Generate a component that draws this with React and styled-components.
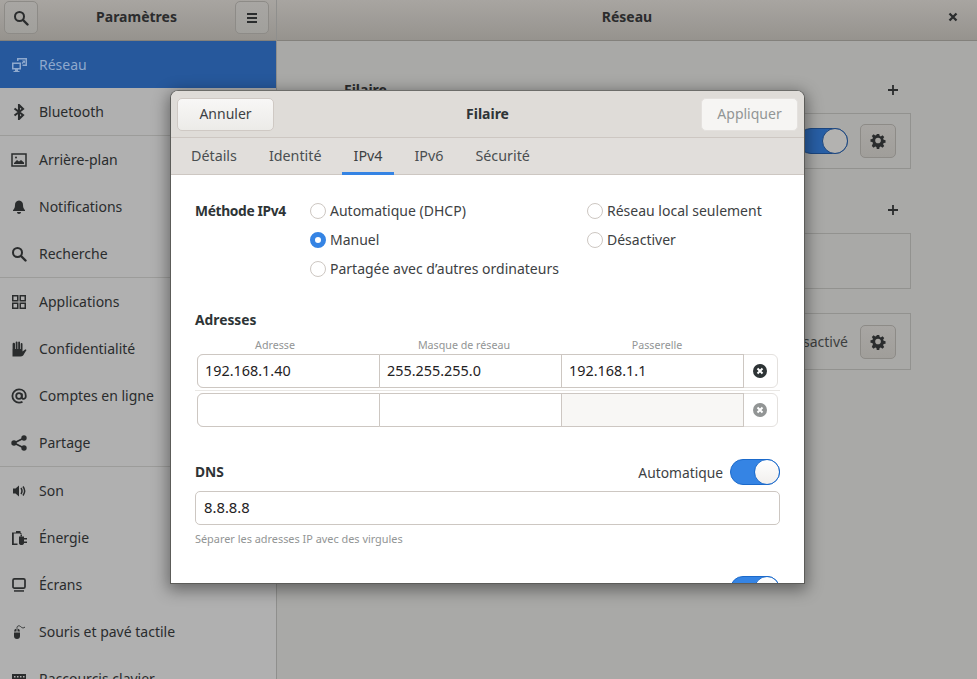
import React from "react";
import styled, { createGlobalStyle } from "styled-components";

const Global = createGlobalStyle`
  html, body { margin: 0; padding: 0; background: #a9a9a7; }
  * { box-sizing: border-box; }
`;

const Page = styled.div`
  position: relative;
  width: 977px;
  height: 679px;
  overflow: hidden;
  display: flex;
  font-family: "Noto Sans", "Open Sans", sans-serif;
  font-size: 14px;
  color: #2a2c2d;
`;

const Sidebar = styled.aside`
  width: 277px;
  flex: none;
  display: flex;
  flex-direction: column;
  background: #b0b0b0;
  border-right: 1px solid #8f8f8d;
`;

const HeaderBar = styled.header`
  height: 41px;
  flex: none;
  display: flex;
  align-items: flex-start;
  justify-content: space-between;
  padding: ${p => (p.$main ? "1px 16px 0 32px" : "1px 7px 0 4px")};
  background: linear-gradient(#a8a5a1, #96938e);
  border-bottom: 1px solid #83817c;
`;

const HeaderTitle = styled.div`
  flex: 1;
  text-align: center;
  font-weight: 700;
  font-size: 14px;
  line-height: 32px;
  color: #2b2c2d;
`;

const HeaderButton = styled.div`
  width: 34px;
  height: 33px;
  display: flex;
  align-items: center;
  justify-content: center;
  border: 1px solid #8d8b87;
  border-radius: 5px;
  background: linear-gradient(#a8a6a3, #a1a09c);
`;

const CloseSlot = styled.div`
  height: 32px;
  display: flex;
  align-items: center;
`;

const Row = styled.div`
  height: 47px;
  flex: none;
  display: flex;
  align-items: center;
  gap: 12px;
  padding-left: 11px;
  background: ${p => (p.$active ? "#26589c" : "transparent")};
  color: ${p => (p.$active ? "#8fa9cd" : "#2a2c2d")};
  white-space: nowrap;
`;

const Sep = styled.div`
  height: 1px;
  flex: none;
  background: #9c9c9a;
`;

const Main = styled.main`
  flex: 1;
  display: flex;
  flex-direction: column;
`;

const MainBody = styled.div`
  flex: 1;
  background: #a9a9a7;
  padding: 39px 66px 0 67px;
`;

const SectionHead = styled.div`
  height: 33px;
  display: flex;
  justify-content: space-between;
  padding-right: 9px;
  font-weight: 700;
  font-size: 14px;
  line-height: 20px;
  color: #2b2c2d;
`;

const PlusSlot = styled.span`
  width: 18px;
  height: 20px;
  display: flex;
  align-items: center;
  justify-content: center;
`;

const BgBox = styled.div`
  height: ${p => p.$h}px;
  margin-bottom: ${p => p.$mb}px;
  border: 1px solid #92928f;
  display: flex;
  align-items: center;
  justify-content: flex-end;
  gap: 12px;
  padding-right: 14px;
  color: #3c3e3e;
`;

const BgGear = styled.div`
  width: 36px;
  height: 34px;
  display: flex;
  align-items: center;
  justify-content: center;
  border: 1px solid #8d8b87;
  border-radius: 5px;
  background: linear-gradient(#a8a6a3, #a09e9a);
`;

const Toggle = styled.div`
  position: relative;
  width: 50px;
  height: 26px;
  flex: none;
  border-radius: 13px;
  background: ${p => (p.$dim ? "#285fa6" : "#3584e4")};
  border: 1px solid ${p => (p.$dim ? "#1b4680" : "#1b6acb")};
`;

const Knob = styled.div`
  position: absolute;
  right: -1px;
  top: -1px;
  width: 26px;
  height: 26px;
  border-radius: 50%;
  background: ${p => (p.$dim ? "#b3b2b0" : "linear-gradient(#ffffff, #f1efed)")};
  border: 1px solid ${p => (p.$dim ? "#1b4680" : "#1b6acb")};
`;

const Dialog = styled.section`
  position: absolute;
  left: 170px;
  top: 90px;
  width: 635px;
  height: 494px;
  display: flex;
  flex-direction: column;
  overflow: hidden;
  background: #fff;
  border: 1px solid #5c5c59;
  border-top-color: #6d6d6a;
  border-radius: 8px 8px 0 0;
`;

const DialogShadow = styled.div`
  position: absolute;
  left: 170px;
  top: 90px;
  width: 635px;
  height: 494px;
  border-radius: 8px 8px 0 0;
  box-shadow: 0 4px 16px 2px rgba(0, 0, 0, 0.42);
`;

const DialogBar = styled.div`
  height: 47px;
  flex: none;
  display: flex;
  align-items: center;
  justify-content: space-between;
  padding: 0 6px;
  background: #dfdcd8;
  border-bottom: 1px solid #cdc7c2;
`;

const DialogTitle = styled.div`
  flex: 1;
  text-align: center;
  font-weight: 700;
  font-size: 14px;
  padding-bottom: 1px;
  color: #2e3436;
`;

const Button = styled.div`
  width: 97px;
  height: 33px;
  display: flex;
  align-items: center;
  justify-content: center;
  padding-bottom: 1px;
  border-radius: 5px;
  border: 1px solid ${p => (p.$disabled ? "#e4e1de" : "#cfc9c4")};
  background: ${p => (p.$disabled ? "#f6f5f3" : "linear-gradient(#f8f7f6, #ecebe8)")};
  color: ${p => (p.$disabled ? "#929595" : "#3d4143")};
`;

const Tabs = styled.nav`
  height: 37px;
  flex: none;
  display: flex;
  gap: 8px;
  padding-left: 8px;
  background: #e1dedb;
  border-bottom: 1px solid #cdc7c2;
  font-size: 14.3px;
`;

const Tab = styled.div`
  height: 37px;
  padding: 1px 12px 0;
  display: flex;
  align-items: center;
  color: ${p => (p.$active ? "#3d4143" : "#4a4e50")};
  border-bottom: 3px solid ${p => (p.$active ? "#3584e4" : "transparent")};
`;

const Content = styled.div`
  flex: 1;
  min-height: 0;
  overflow: hidden;
  padding: 21px 24px 0;
  color: #2e3436;
`;

const MethodGrid = styled.div`
  display: grid;
  grid-template-columns: 115px 277px 1fr;
  grid-auto-rows: 29px;
  align-items: center;
`;

const BoldLabel = styled.div`
  font-weight: 700;
  font-size: 13.8px;
  letter-spacing: ${p => (p.$tight ? "-0.35px" : "0")};
  color: #2e3436;
  padding-bottom: ${p => p.$pb || 0}px;
`;

const RadioRow = styled.div`
  display: flex;
  align-items: center;
  gap: 4px;
  white-space: nowrap;
  color: #3d4143;
  grid-column: ${p => p.$col};
`;

const RadioDot = styled.div`
  width: 16px;
  height: 16px;
  flex: none;
  border-radius: 50%;
  background: #fff;
  border: ${p => (p.$on ? "5px solid #3584e4" : "1px solid #cdc7c2")};
`;

const AddrSection = styled.div`
  margin-top: 27px;
`;

const ColHeads = styled.div`
  display: grid;
  grid-template-columns: 156px 222px 164px;
  margin: 6px 2px -1px;
  font-size: 10.7px;
  line-height: 20px;
  color: #929595;
  text-align: center;
`;

const AddrRow = styled.div`
  display: grid;
  grid-template-columns: 182px 182px 182px 1fr;
  height: 34px;
  margin: 0 2px;
  background: #fff;
  border: 1px solid #e4e1de;
  border-radius: 6px;
`;

const RowLine = styled.div`
  height: 1px;
  background: #e9e7e4;
  margin: 2px 0;
`;

const Cell = styled.div`
  display: flex;
  align-items: center;
  padding: 0 0 1px 7px;
  font-size: 14.4px;
  color: #1f2224;
  background: ${p => (p.$off ? "#f8f7f5" : "#fff")};
  border: 0 solid #cdc7c2;
  border-top-width: 1px;
  border-bottom-width: 1px;
  border-right-width: 1px;
  ${p => (p.$first ? "border-left-width: 1px; border-radius: 6px 0 0 6px; margin-left: -1px;" : "")}
  margin-top: -1px;
  margin-bottom: -1px;
`;

const CellBtn = styled.div`
  display: flex;
  align-items: center;
  justify-content: center;
  padding-right: 2px;
`;

const DnsHead = styled.div`
  margin-top: 32px;
  height: 26px;
  display: flex;
  align-items: center;
  justify-content: space-between;
`;

const AutoWrap = styled.div`
  display: flex;
  align-items: center;
  gap: 7px;
  font-size: 13.8px;
  color: #3d4143;
`;

const TextInput = styled.div`
  margin-top: 6px;
  height: 34px;
  display: flex;
  align-items: center;
  padding: 0 0 2px 8px;
  font-size: 14.8px;
  border: 1px solid #cdc7c2;
  border-radius: 5px;
  color: #1f2224;
`;

const Help = styled.div`
  margin-top: 6px;
  font-size: 10.9px;
  line-height: 16px;
  color: #929595;
`;

const ClipToggleRow = styled.div`
  margin-top: 29px;
  display: flex;
  justify-content: flex-end;
`;

const Svg = ({ children, size = 16, color = "currentColor" }) => (
  <svg width={size} height={size} viewBox="0 0 16 16" fill={color} style={{ flex: "none" }}>
    {children}
  </svg>
);

const PlusIcon = () => (
  <Svg>
    <path d="M7.100 3h1.800v4.100H13v1.800H8.900V13H7.100V8.900H3V7.100h4.100z" fill="#2a2c2d" />
  </Svg>
);

const I = {
  search: (
    <Svg color="#2a2c2d">
      <circle cx="6.5" cy="6.5" r="4.5" fill="none" stroke="#2a2c2d" strokeWidth="2" />
      <path d="M10 10l4.5 4.5" stroke="#2a2c2d" strokeWidth="2.4" strokeLinecap="round" />
    </Svg>
  ),
  menu: (
    <Svg>
      <path d="M3 3h10v2H3zM3 7h10v2H3zM3 11h10v2H3z" fill="#2a2c2d" />
    </Svg>
  ),
  close: (
    <Svg size={16}>
      <path d="M4.500 4.500l7 7M11.500 4.500l-7 7" stroke="#2a2c2d" strokeWidth="2.300" />
    </Svg>
  ),
  net: (
    <Svg>
      <path fillRule="evenodd" d="M1 5.500h9v7H7v1.500h1.500V15h-6v-1H4v-1.500H1zM2.500 7v4h6V7z" />
      <path d="M6 1h10v8h-4.500V7.500H14.500V2.500H7.500V4H6z" />
      <path d="M11 3.500h3v3l-1-1-1.500 1.500-1-1L12 4.500z" />
    </Svg>
  ),
  bt: (
    <Svg>
      <path d="M3.500 4.500L12 11l-4 4V1l4 4-8.500 6.500" fill="none" stroke="currentColor" strokeWidth="2.100" />
    </Svg>
  ),
  img: (
    <Svg>
      <rect x="1" y="2" width="14" height="12" fill="none" stroke="currentColor" strokeWidth="1.500" />
      <path d="M3 11l3-3 2 1.500L10 8l3 2.500V12H3z" />
      <circle cx="5" cy="5.500" r="1" />
    </Svg>
  ),
  bell: (
    <Svg>
      <path d="M8 1.500c-2.800 0-4 2.200-4 4.500 0 3-1 4-2 5.200V12h12v-.8c-1-1.200-2-2.200-2-5.200 0-2.300-1.200-4.500-4-4.500zM6 13h4c0 1.200-.8 2-2 2s-2-.8-2-2z" />
    </Svg>
  ),
  grid: (
    <Svg>
      <path
        fillRule="evenodd"
        d="M1 1h6.500v6.500H1zM2.500 2.500V6H6V2.500zM8.500 1H15v6.500H8.500zM10 2.500V6h3.500V2.500zM1 8.500h6.500V15H1zM2.500 10v3.500H6V10zM8.500 8.500H15V15H8.500zM10 10v3.500h3.500V10z"
      />
    </Svg>
  ),
  hand: (
    <Svg>
      <path d="M1.500 8V15.500h8c2 0 3-1 3.500-2.500l2.500-4-1-.8-3 2.300V3a.9.9 0 0 0-1.800 0V8H9V1.300a.9.9 0 0 0-1.800 0V8h-.7V1.300a.9.9 0 0 0-1.800 0V8H4V3a1.200 1.200 0 0 0-2.400 0V8z" />
    </Svg>
  ),
  at: (
    <Svg>
      <circle cx="8" cy="8" r="2.800" fill="none" stroke="currentColor" strokeWidth="1.800" />
      <path d="M10.800 5.500V9c0 2.800 4 2.500 4-1 0-4-3-6.600-6.800-6.600A6.600 6.600 0 0 0 8 14.600c1.500 0 2.600-.3 3.500-.9" fill="none" stroke="currentColor" strokeWidth="1.800" />
    </Svg>
  ),
  share: (
    <Svg>
      <circle cx="3" cy="8" r="2.700" />
      <circle cx="13" cy="3" r="2.700" />
      <circle cx="13" cy="13" r="2.700" />
      <path d="M3 8l10-5M3 8l10 5" stroke="currentColor" strokeWidth="1.800" />
    </Svg>
  ),
  sound: (
    <Svg>
      <path d="M2 5.500h2.500L8 2.500v11l-3.500-3H2z" />
      <path d="M10 5c1.200 1.800 1.200 4.200 0 6M12 3.500c2 2.700 2 6.300 0 9" fill="none" stroke="currentColor" strokeWidth="1.500" />
    </Svg>
  ),
  power: (
    <Svg>
      <path d="M1 2.500h4V1h4.500v1.500L11 4H9.500L9 3.500H2.800v10h3.700V15H1z" />
      <path d="M8 6.500h5v1.500h3v1.500h-3v2h3V13h-3v.5c-.5 1-1.500 1.500-2.500 1.500S8.500 14.500 8 13.500z" />
      <path d="M9.500 4.500H11v2H9.500z" />
    </Svg>
  ),
  screen: (
    <Svg>
      <rect x="2" y="1.800" width="12" height="9.400" rx="1.500" fill="none" stroke="currentColor" strokeWidth="1.700" />
      <path d="M3 13.200h10v1.500H3z" />
    </Svg>
  ),
  mouse: (
    <Svg>
      <path d="M3 7.500a3 3 0 0 1 2.500-2.900v2.900zM6.500 4.600a3 3 0 0 1 2.500 2.900H6.500zM3 8.500h6V12a3 3 0 0 1-6 0z" />
      <path d="M6 4.500V3.500C6 2 8 1 9.500 2.500s3 2 4.500.5" fill="none" stroke="currentColor" strokeWidth=".9" />
    </Svg>
  ),
  keyboard: (
    <Svg>
      <path fillRule="evenodd" d="M1 3h14v10H1zM3 5v1.500h1.500V5zM6 5v1.500h1.500V5zM9 5v1.500h1.500V5zM12 5v1.500h1.500V5zM3 8v1.500h10.500V8z" />
    </Svg>
  ),
  gear: (
    <Svg size={16}>
      <path fillRule="evenodd" d="M6.700 1h2.600l.4 2 1.300.6 1.700-1.200 1.900 1.900-1.200 1.700.6 1.300 2 .4v2.600l-2 .4-.6 1.300 1.200 1.700-1.900 1.900-1.700-1.200-1.300.6-.4 2H6.700l-.4-2-1.300-.6-1.700 1.200-1.900-1.900L2.600 10.900 2 9.600 0 9.200V6.700l2-.4.6-1.300L1.400 3.300l1.900-1.900L5 2.600l1.300-.6zM8 5a3 3 0 1 0 0 6 3 3 0 0 0 0-6z" transform="translate(.5 0) scale(.94)" fill="#2a2c2d" />
    </Svg>
  ),
  clear: c => (
    <Svg>
      <circle cx="8" cy="8" r="7" fill={c} />
      <path d="M5.500 5.500l5 5M10.500 5.500l-5 5" stroke="#fff" strokeWidth="2" />
    </Svg>
  ),
};

const groups = [
  [["net", "Réseau", true], ["bt", "Bluetooth"]],
  [["img", "Arrière-plan"], ["bell", "Notifications"], ["search", "Recherche"]],
  [["grid", "Applications"], ["hand", "Confidentialité"], ["at", "Comptes en ligne"], ["share", "Partage"]],
  [["sound", "Son"], ["power", "Énergie"], ["screen", "Écrans"], ["mouse", "Souris et pavé tactile"], ["keyboard", "Raccourcis clavier"]],
];

export default function App() {
  return (
    <Page>
      <Global />
      <Sidebar>
        <HeaderBar>
          <HeaderButton>{I.search}</HeaderButton>
          <HeaderTitle>Paramètres</HeaderTitle>
          <HeaderButton>{I.menu}</HeaderButton>
        </HeaderBar>
        {groups.map((g, i) => (
          <React.Fragment key={i}>
            {i > 0 && <Sep />}
            {g.map(([ic, label, active]) => (
              <Row key={label} $active={active}>
                {I[ic]}
                {label}
              </Row>
            ))}
          </React.Fragment>
        ))}
      </Sidebar>
      <Main>
        <HeaderBar $main>
          <HeaderTitle>Réseau</HeaderTitle>
          <CloseSlot>{I.close}</CloseSlot>
        </HeaderBar>
        <MainBody>
          <SectionHead>
            Filaire
            <PlusSlot><PlusIcon /></PlusSlot>
          </SectionHead>
          <BgBox $h={56} $mb={31}>
            <Toggle $dim>
              <Knob $dim />
            </Toggle>
            <BgGear>{I.gear}</BgGear>
          </BgBox>
          <SectionHead>
            <span />
            <PlusSlot><PlusIcon /></PlusSlot>
          </SectionHead>
          <BgBox $h={56} $mb={24} />
          <BgBox $h={57} $mb={0}>
            Désactivé
            <BgGear>{I.gear}</BgGear>
          </BgBox>
        </MainBody>
      </Main>
      <DialogShadow />
      <Dialog>
        <DialogBar>
          <Button>Annuler</Button>
          <DialogTitle>Filaire</DialogTitle>
          <Button $disabled>Appliquer</Button>
        </DialogBar>
        <Tabs>
          <Tab>Détails</Tab>
          <Tab>Identité</Tab>
          <Tab $active>IPv4</Tab>
          <Tab>IPv6</Tab>
          <Tab>Sécurité</Tab>
        </Tabs>
        <Content>
          <MethodGrid>
            <BoldLabel $tight>Méthode IPv4</BoldLabel>
            <RadioRow>
              <RadioDot />
              Automatique (DHCP)
            </RadioRow>
            <RadioRow>
              <RadioDot />
              Réseau local seulement
            </RadioRow>
            <RadioRow $col="2">
              <RadioDot $on />
              Manuel
            </RadioRow>
            <RadioRow>
              <RadioDot />
              Désactiver
            </RadioRow>
            <RadioRow $col="2">
              <RadioDot />
              Partagée avec d’autres ordinateurs
            </RadioRow>
          </MethodGrid>
          <AddrSection>
            <BoldLabel>Adresses</BoldLabel>
            <ColHeads>
              <span>Adresse</span>
              <span>Masque de réseau</span>
              <span>Passerelle</span>
            </ColHeads>
            <AddrRow>
              <Cell $first>192.168.1.40</Cell>
              <Cell>255.255.255.0</Cell>
              <Cell>192.168.1.1</Cell>
              <CellBtn>{I.clear("#2e3436")}</CellBtn>
            </AddrRow>
            <RowLine />
            <AddrRow>
              <Cell $first />
              <Cell />
              <Cell $off />
              <CellBtn>{I.clear("#929595")}</CellBtn>
            </AddrRow>
          </AddrSection>
          <DnsHead>
            <BoldLabel $pb={2}>DNS</BoldLabel>
            <AutoWrap>
              Automatique
              <Toggle>
                <Knob />
              </Toggle>
            </AutoWrap>
          </DnsHead>
          <TextInput>8.8.8.8</TextInput>
          <Help>Séparer les adresses IP avec des virgules</Help>
          <ClipToggleRow>
            <Toggle>
              <Knob />
            </Toggle>
          </ClipToggleRow>
        </Content>
      </Dialog>
    </Page>
  );
}
